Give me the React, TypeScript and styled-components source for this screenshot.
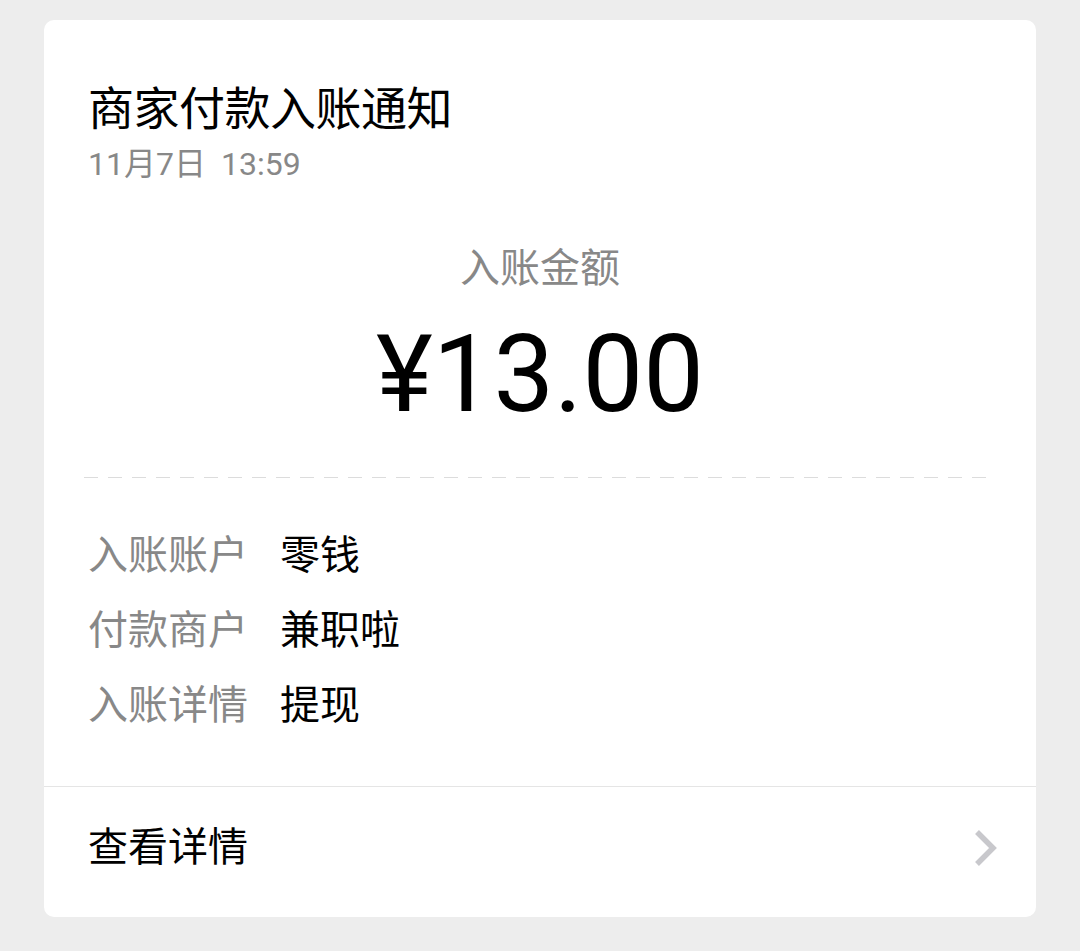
import React from "react";
import styled, { createGlobalStyle } from "styled-components";

const GlobalStyle = createGlobalStyle`
  html, body {
    margin: 0;
    padding: 0;
    background: #ededed;
  }
  body {
    font-family: Roboto, "Noto Sans CJK SC", sans-serif;
    -webkit-font-smoothing: antialiased;
  }
`;

interface DetailRow {
  label: string;
  value: string;
}

const rows: DetailRow[] = [
  { label: "入账账户", value: "零钱" },
  { label: "付款商户", value: "兼职啦" },
  { label: "入账详情", value: "提现" },
];

const Page = styled.div`
  padding: 20px 44px 35px;
`;

const Card = styled.div`
  background: #fff;
  border-radius: 10px;
  overflow: hidden;
`;

const Body = styled.div`
  padding: 66px 44px 43px;
  border-bottom: 1px solid #e5e5e5;
`;

const Title = styled.div`
  font-size: 46px;
  line-height: 46px;
  letter-spacing: -0.5px;
  color: #000;
`;

const Time = styled.div`
  margin-top: 16px;
  font-size: 32px;
  line-height: 32px;
  color: #888;

  span {
    margin-left: 15px;
  }
`;

const AmountLabel = styled.div`
  margin-top: 69px;
  text-align: center;
  font-size: 40px;
  line-height: 40px;
  color: #888;
`;

const Amount = styled.div`
  margin-top: 31px;
  text-align: center;
  font-size: 108px;
  line-height: 108px;
  color: #000;
`;

const Dashed = styled.div`
  margin: 49px -4px 40px;
  height: 1px;
  background: repeating-linear-gradient(
    to right,
    #dcdcdc 0,
    #dcdcdc 14px,
    transparent 14px,
    transparent 24px
  );
`;

const Details = styled.div`
  display: grid;
  grid-template-columns: auto 1fr;
  column-gap: 32px;
  font-size: 40px;
  line-height: 75px;
`;

const Label = styled.div`
  color: #888;
`;

const Value = styled.div`
  color: #000;
`;

const Footer = styled.div`
  display: flex;
  align-items: center;
  justify-content: space-between;
  padding: 41px 38px 49px 44px;
  font-size: 40px;
  line-height: 40px;
  color: #000;
`;

const Chevron = () => (
  <svg width="26" height="38" viewBox="0 0 26 38" fill="none">
    <polyline
      points="5,3 21,19 5,35"
      stroke="#c8c8cc"
      strokeWidth="5.5"
      strokeLinejoin="miter"
    />
  </svg>
);

const App: React.FC = () => (
  <>
    <GlobalStyle />
    <Page>
      <Card>
        <Body>
          <Title>商家付款入账通知</Title>
          <Time>
            11月7日<span>13:59</span>
          </Time>
          <AmountLabel>入账金额</AmountLabel>
          <Amount>¥13.00</Amount>
          <Dashed />
          <Details>
            {rows.map(r => (
              <React.Fragment key={r.label}>
                <Label>{r.label}</Label>
                <Value>{r.value}</Value>
              </React.Fragment>
            ))}
          </Details>
        </Body>
        <Footer>
          查看详情
          <Chevron />
        </Footer>
      </Card>
    </Page>
  </>
);

export default App;
